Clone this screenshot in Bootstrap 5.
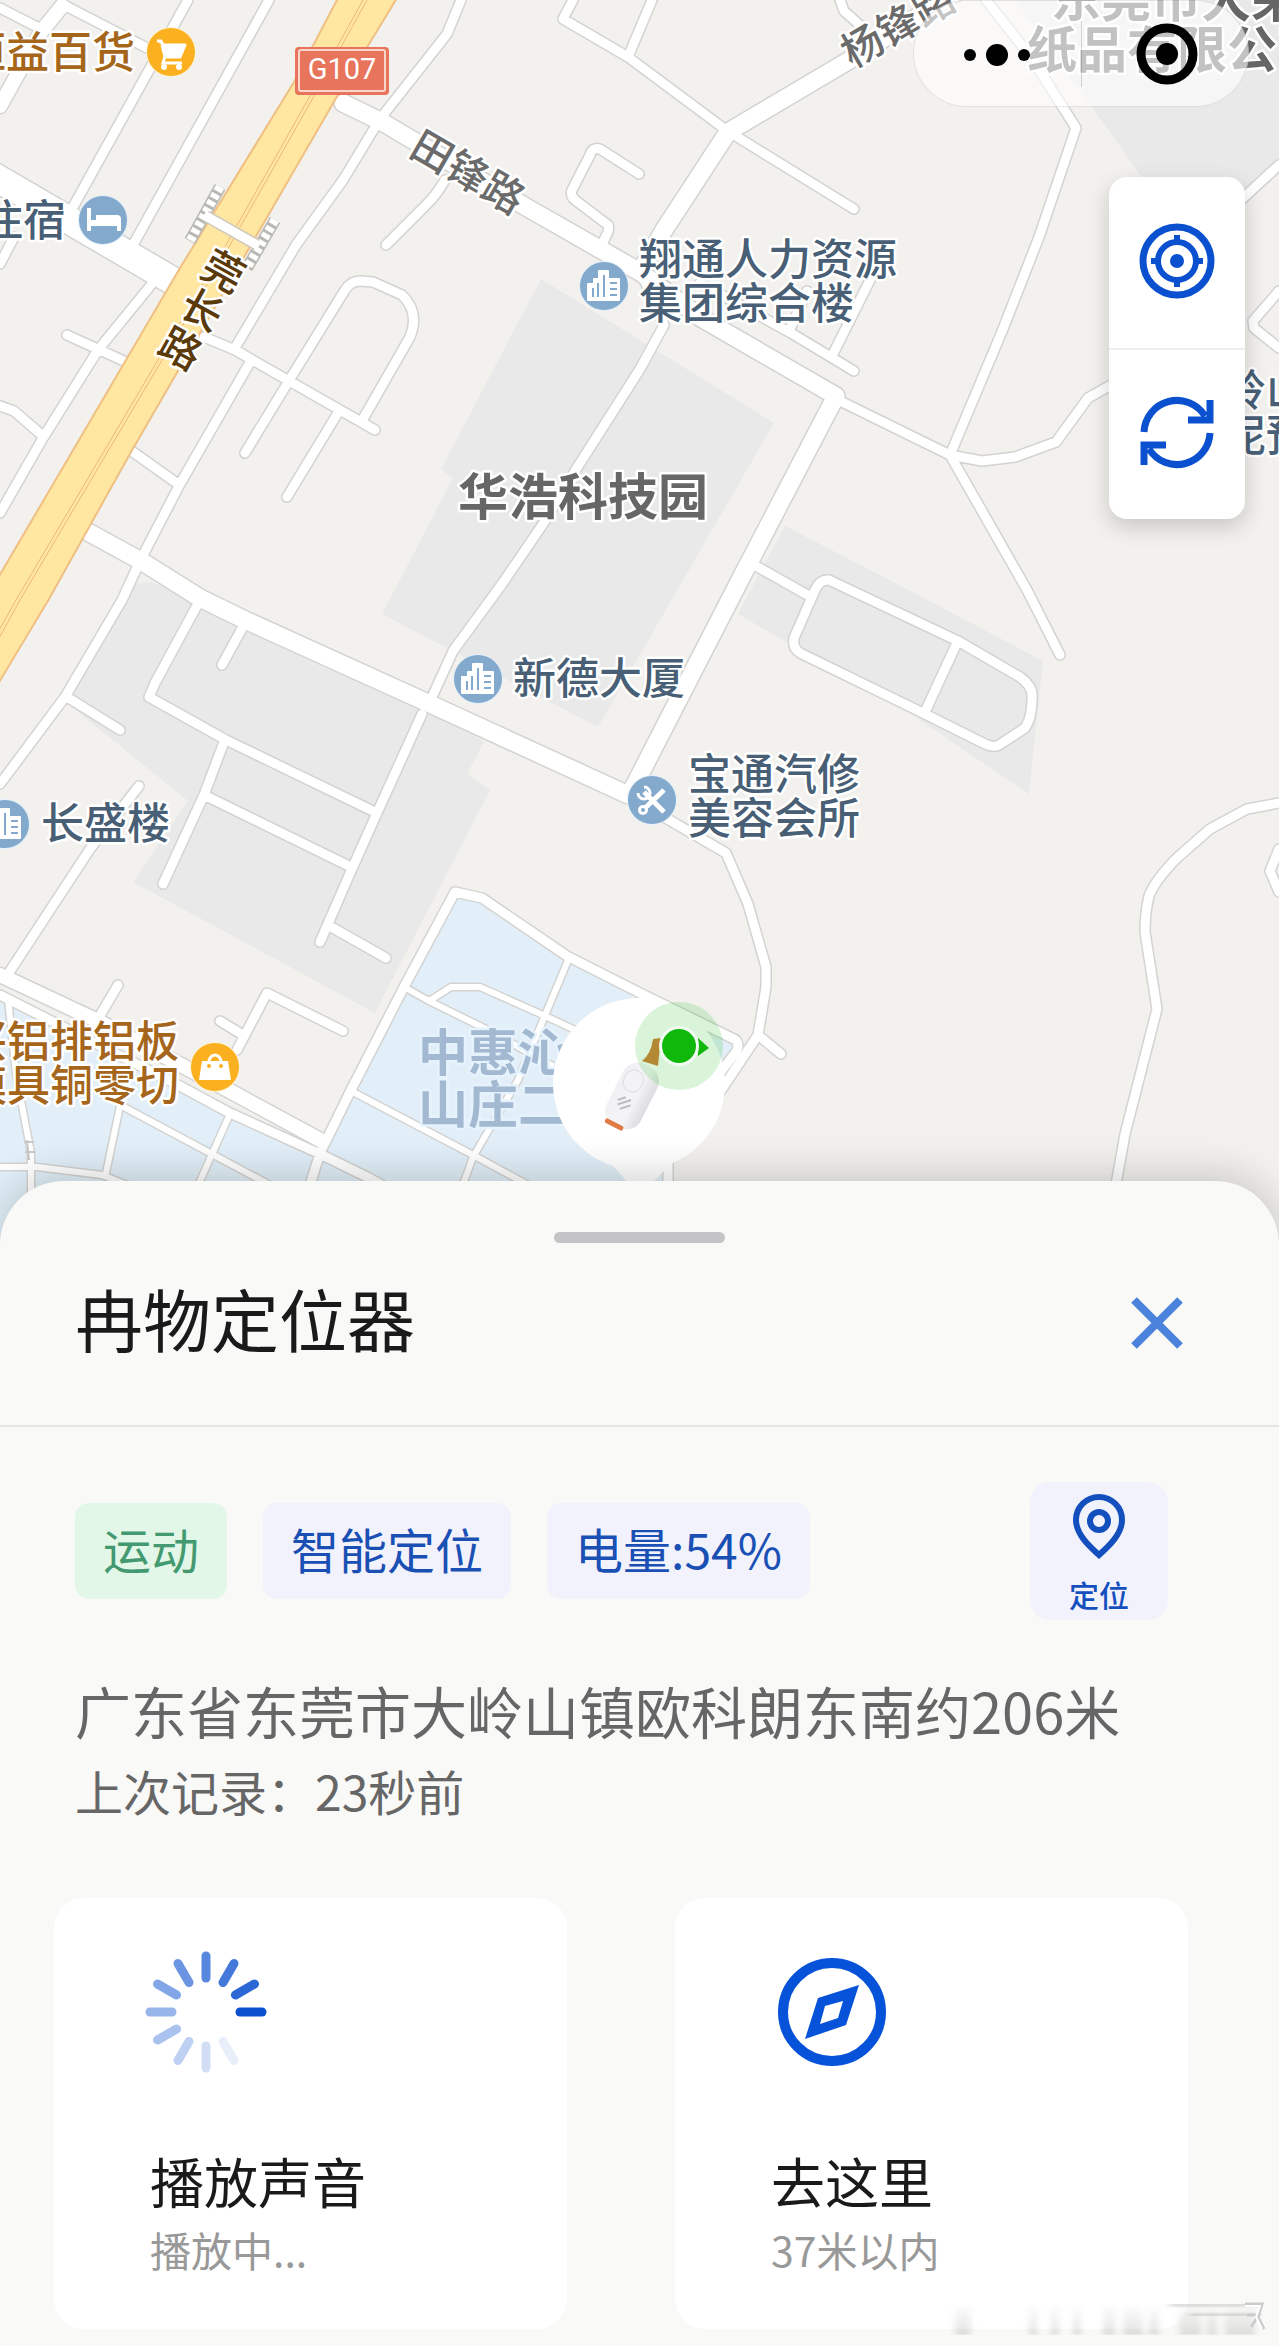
<!DOCTYPE html>
<html lang="zh-CN">
<head>
<meta charset="utf-8">
<meta name="viewport" content="width=device-width, initial-scale=1">
<title>冉物定位器</title>
<link rel="stylesheet" href="https://cdn.jsdelivr.net/npm/bootstrap@5.3.0/dist/css/bootstrap.min.css">
<style>
  body { background: #f9f9f7; color: #1a1a1a; font-family: "Noto Sans CJK SC", sans-serif; overflow-x: hidden; }
  button { font-family: inherit; }

  /* map */
  .map-canvas { background: #f2f1ed; }
  .map-canvas text { font-family: "Noto Sans CJK SC", sans-serif; paint-order: stroke; stroke: #fff; stroke-width: 5px; stroke-linejoin: round; }
  .zone { fill: #e9e9e9; }
  .estate { fill: #e2eff8; }
  .edge { stroke: #d3d3d2; fill: none; stroke-linejoin: round; stroke-linecap: round; }
  .lane { stroke: #fff; fill: none; stroke-linejoin: round; stroke-linecap: round; }
  .poi { font-size: 43px; font-weight: 500; fill: #485f76; }
  .poi.shop { fill: #a5661b; }
  .area-name { font-size: 50px; font-weight: 700; fill: #666; }
  .map-canvas .estate-name { font-size: 50px; font-weight: 700; fill: #a3b9d1; stroke: #e6f3fd; }
  .street { font-size: 41px; font-weight: 500; fill: #6b6b6b; text-anchor: middle; }
  .street.main { fill: #5a3a08; }
  .map-canvas .shield { font-family: Roboto, sans-serif; font-size: 29px; fill: #fff; stroke: none; text-anchor: middle; }

  /* controls floating over the map */
  .capsule { top: 0; right: 30px; width: 336px; height: 107px; border: 1px solid #00000018; border-radius: 54px; background: #ffffff99; }
  .capsule button, .map-tools button, .btn-x { background: none; border: 0; padding: 0; }
  .capsule .split { width: 1px; height: 66px; background: #00000026; }
  .map-tools { top: 177px; right: 34px; width: 136px; border-radius: 18px; background: #fff; box-shadow: 0 8px 22px #0000002e; }
  .map-tools button { height: 171px; padding-bottom: 4px; color: #0a50cf; }
  .map-tools button + button { border-top: 2px solid #ededed; }

  /* bottom sheet */
  .sheet { margin-top: -69px; padding-top: 51px; padding-bottom: 18px; background: #f9f9f7; border-radius: 64px 64px 0 0; box-shadow: 0 -6px 40px #0000002e; }
  .grip { width: 171px; height: 11px; border-radius: 6px; background: #c4c4c6; }
  .sheet-head { padding: 35px 92px 57px 75px; border-bottom: 2px solid #e6e6e5; }
  .sheet-title { padding-bottom: 10px; font-size: 68px; line-height: 80px; font-weight: 400; }
  .status { padding: 55px 111px 0 75px; }
  .tags { gap: 36px; }
  .chip { padding: 0 28px 6px; border-radius: 14px; font-size: 48px; line-height: 90px; background: #f2f2fd; color: #1a4fb4; }
  .chip.moving { background: #e2f7e7; color: #449a70; }
  .btn-locate { width: 138px; height: 138px; border: 0; border-radius: 20px; background: #f2f2fd; color: #1450bd; font-size: 30px; line-height: 36px; font-weight: 500; padding: 12px 0 8px; }
  .place { padding: 50px 75px 68px; color: #666; line-height: 80px; }
  .place .addr { font-size: 56px; }
  .place .seen { font-size: 48px; }
  .actions { gap: 108px; padding: 0 91px 0 54px; }
  .action { flex: 1 1 0; border: 0; border-radius: 30px; background: #fff; padding: 54px 40px 48px 96px; color: #1a1a1a; text-align: left; }
  .action .glyph { display: block; overflow: visible; margin-bottom: 73px; }
  .action .name { font-size: 54px; line-height: 72px; }
  .action .note { font-size: 41px; line-height: 64px; color: #999; }
  .smear { right: 10px; bottom: 12px; width: 330px; height: 34px; }
</style>
<script src="https://cdn.jsdelivr.net/npm/bootstrap@5.3.0/dist/js/bootstrap.bundle.min.js" defer></script>
</head>
<body>
<main class="position-relative">
  <section class="position-relative" aria-label="地图">
    <svg class="map-canvas d-block w-100" viewBox="0 0 1279 1250" role="img" aria-label="设备位置地图">
      <defs>
        <path id="r-small" d="M0 8 41 29M62 4 147 48M188 0 73 207M269 0 133 245M461 0 447 34 380 119 343 180 296 245 235 348M204 337 235 350 375 430M249 364 180 484 141 559 122 600 65 697 0 784M133 452 178 484M245 453 290 379 345 290Q351 281 360 281L373 282 402 295Q420 312 410 337L363 419M339 411 287 497M445 180Q436 196 424 207L386 245M151 285 98 350 43 438 0 513M67 335 126 362M0 406 14 411 43 436M14 237 0 264M573 0 563 19 628 57 726 130 854 209M652 0 628 57M639 174 600 149Q592 147 590 155L572 190Q570 196 575 200L608 225Q610 230 606 236L600 249M700 283 791 333 854 371M832 356 872 276M791 327 807 291M840 0 844 11 862 27M986 0 1031 57 1076 128 1039 237 1003 329 950 455M838 400 950 455 982 461 1015 457 1056 442 1088 398 1120 380M950 455 1027 590 1060 655M1279 165 1240 201M1279 291 1253 321 1254 328 1279 348M640 270 664 325 640 369 575 471 543 524 502 584 453 651 433 695M422 714 377 813 351 871 320 942M333 928 386 958M756 566 811 597M829 580 958 641 1020 677Q1034 687 1032 699 1032 718 1025 728L999 745Q994 748 985 744L925 714 800 653Q792 648 794 638L815 590Q820 579 829 580ZM956 645 925 712M664 817 726 853 748 904 766 967 766 987 758 1035 700 1122M758 1035 781 1054M1279 803 1247 809 1210 829 1178 857Q1155 880 1149 896 1145 912 1145 932L1157 1009 1125 1134 1115 1190M1279 849 1270 871 1279 892M200 600 155 683 149 697 226 740 377 813M245 623 222 665M67 697 120 730M224 742 204 795 163 884M204 795 351 867M139 786 90 849 10 971M118 985 98 1019M220 1021 243 1035M237 1050 267 993 343 1031M0 995 180 1086 228 1112 318 1153 367 1177 400 1195M310 1185 320 1153 351 1090 404 987 455 892 482 898 567 956 640 993 736 1040Q740 1046 736 1052L668 1140 668 1200M206 216 257 245"/>
        <path id="r-mid" d="M62 6 41 32 0 106M0 975 98 1021 228 1090 322 1141"/>
        <path id="r-wide" d="M343 103 382 122 526 207 640 272 701 318 836 396 740 580 632 790M88 532 141 561 200 598 245 620 428 703 624 793 652 804M960-10 848 61 728 132 664 230 640 272"/>
        <path id="r-lot" d="M404 987 429 1001 490 1031 560 1070M429 1001 451 987 480 987 543 1015 590 1037M569 958 518 1080 473 1157 461 1190M353 1092 473 1155 530 1186M122 1106 210 1153 270 1185M230 1114 196 1190M120 1106 106 1173M0 1167 37 1167 102 1175 140 1190M8 999 16 1074 31 1153 31 1240"/>
        <g id="ic-tower">
          <circle r="25" fill="#e4f0fa"/><circle r="24" fill="#83a9cc"/>
          <path d="M-16 14V-2h6v-5h5v-8h9v8h11v21z" fill="#fff" stroke="#fff" stroke-width="2" stroke-linejoin="round"/>
          <path d="M-11 11V2M-6 11V-3M0 11v-22M6 -3h7M6 3h7M6 9h7" stroke="#83a9cc" stroke-width="2"/>
        </g>
        <linearGradient id="body-shade" x1="0" x2="1"><stop offset="0" stop-color="#f1f1f4"/><stop offset=".6" stop-color="#f4f4f6"/><stop offset="1" stop-color="#dcdce1"/></linearGradient>
      </defs>

      <g class="zone">
        <path d="M541 279 774 423 598 727 382 614 453 478 441 469z"/>
        <path d="M1015 0H1279V165L1247 195 1155 195z"/>
        <path d="M785 526 901 586 1043 661 1029 794 905 710 738 614z"/>
        <path d="M135 584 151 582 245 620 428 703 484 742 467 774 490 790 375 1013 133 882 188 801 67 703z"/>
      </g>
      <path class="estate" d="M320 1153 404 987 455 892 482 898 567 956 738 1043 668 1140 660 1250H0V995z"/>

      <g class="edge"><use href="#r-lot" stroke-width="9"/><use href="#r-small" stroke-width="12"/><use href="#r-mid" stroke-width="17"/><use href="#r-wide" stroke-width="20"/><path d="M-10 174 180 285" stroke-width="30"/></g>
      <g class="lane"><use href="#r-lot" stroke-width="6"/><use href="#r-small" stroke-width="9"/><use href="#r-mid" stroke-width="14"/><use href="#r-wide" stroke-width="17"/><path d="M-10 174 180 285" stroke-width="27"/></g>
      <path d="M27 1140 29 1160M24 1142h10M25 1152h10" stroke="#c8c8c8" stroke-width="2" fill="none"/>

      <path d="M338-2 294 82 180 268-2 578V684L49 599 131 452 335 100 397-2z" fill="#ffe7a2" stroke="#efbf83" stroke-width="2"/>
      <path d="M367 0 314 96 230 245 20 600-2 640M363 0 310 96 226 245 16 600-2 632" fill="none" stroke="#eeb67b" stroke-width="1"/>
      <g fill="none">
        <path d="M220 187 190 241M275 220 247 268" stroke="#b9b9b3" stroke-width="12"/>
        <path d="M220 187 190 241M275 220 247 268" stroke="#fff" stroke-width="9" stroke-dasharray="5 3"/>
        <path d="M206 216 257 245" stroke="#cfcabb" stroke-width="12"/><path d="M204 215 259 246" stroke="#fff" stroke-width="9"/>
      </g>
      <rect x="295" y="47" width="94" height="48" rx="4" fill="#e8745c"/><rect x="299" y="50" width="86" height="41" rx="2" fill="none" stroke="#f9d5cc" stroke-width="2"/>
      <text class="shield" x="342" y="79">G107</text>

      <text class="poi shop" x="135" y="68" text-anchor="end">恒益百货</text>
      <text class="poi" x="66" y="236" text-anchor="end">住宿</text>
      <text class="poi" x="639" y="275">翔通人力资源<tspan x="639" y="319">集团综合楼</tspan></text>
      <text class="poi" x="513" y="694">新德大厦</text>
      <text class="poi" x="688" y="790">宝通汽修<tspan x="688" y="834">美容会所</tspan></text>
      <text class="poi" x="41" y="839">长盛楼</text>
      <text class="poi shop" x="179" y="1057" text-anchor="end">兴铝排铝板<tspan x="179" y="1101">模具铜零切</tspan></text>
      <text class="poi" x="1223" y="406">岭山<tspan x="1223" y="451">泥预</tspan></text>
      <text class="area-name" x="458" y="515">华浩科技园</text>
      <text class="area-name" x="1051" y="17">东莞市大荣<tspan x="1027" y="68">纸品有限公司</tspan></text>
      <text class="estate-name" x="418" y="1071">中惠沁<tspan x="418" y="1123">山庄二</tspan></text>
      <text class="street" transform="translate(468 172) rotate(30)" y="15">田锋路</text>
      <text class="street" transform="translate(898 25) rotate(-30)" y="15">杨锋路</text>
      <g transform="translate(202 310) rotate(29)"><text class="street main"><tspan x="0" y="-29">莞</tspan><tspan x="0" y="15">长</tspan><tspan x="0" y="59">路</tspan></text></g>

      <g transform="translate(171 52)"><circle r="25" fill="#fff3d6"/><circle r="24" fill="#fbb01f"/><path d="M-14-11h4l2 4H14L9 5H-6L-9-7" fill="#fff" stroke="#fff" stroke-width="3" stroke-linejoin="round"/><path d="M-6 4-8 11H11" fill="none" stroke="#fff" stroke-width="3"/><circle cx="-7" cy="15" r="3" fill="#fff"/><circle cx="8" cy="15" r="3" fill="#fff"/></g>
      <g transform="translate(103 220)"><circle r="25" fill="#e4f0fa"/><circle r="24" fill="#83a9cc"/><path d="M-16-12h4V0H18V11h-4V6h-26v5h-4z" fill="#fff"/><path d="M-7-5H14Q18-5 18-1V2H-7z" fill="#fff"/></g>
      <use href="#ic-tower" x="604" y="286"/><use href="#ic-tower" x="478" y="679"/><use href="#ic-tower" x="5" y="824"/>
      <g transform="translate(652 800)"><circle r="25" fill="#e4f0fa"/><circle r="24" fill="#83a9cc"/><path d="M-8-8 12 12" stroke="#fff" stroke-width="5"/><path d="M12-10-9 10" stroke="#fff" stroke-width="5"/><path d="M-8-13a6 6 0 1 1-6 6" fill="none" stroke="#fff" stroke-width="3"/><circle cx="-9" cy="10" r="5" fill="#fff"/><circle cx="-9" cy="10" r="2" fill="#83a9cc"/></g>
      <g transform="translate(215 1067)"><circle r="25" fill="#fff3d6"/><circle r="24" fill="#fbb01f"/><path d="M-13-6H13L16 13H-16z" fill="#fff"/><path d="M-6-5a6 7 0 0 1 12 0" fill="none" stroke="#fff" stroke-width="3"/><circle cx="-6" cy="-1" r="2" fill="#fbb01f"/><circle cx="6" cy="-1" r="2" fill="#fbb01f"/></g>

      <g>
        <path d="M606 1158 640 1196 676 1158z" fill="#fff"/><circle cx="639" cy="1084" r="86" fill="#fff"/>
        <path d="M653 1039 661 1038 659 1056 658 1066 642 1061Q651 1054 653 1039z" fill="#d2803c"/>
        <g transform="translate(632 1096) rotate(27)">
          <rect x="-19" y="-34" width="38" height="68" rx="16" fill="url(#body-shade)"/>
          <rect x="-15" y="-25" width="19" height="22" rx="9" fill="#f3f3f7" stroke="#dcdce4"/>
          <path d="M-11 10-5 4M-9 14 1 4M-5 17 3 9" stroke="#b9b9c0" stroke-width="2"/>
          <rect x="-13" y="31" width="20" height="5" rx="2" fill="#e07a44"/>
        </g>
        <circle cx="679" cy="1046" r="44" fill="#18bb18" fill-opacity=".16"/>
        <path d="M698 1038 709 1048 698 1056z" fill="#11b80c"/>
        <circle cx="679" cy="1046" r="20" fill="#f2fbf1"/><circle cx="679" cy="1046" r="17" fill="#11b80c"/>
      </g>
    </svg>

    <div class="capsule position-absolute d-flex align-items-center">
      <button type="button" class="w-50 h-100" aria-label="更多"><svg width="66" height="24" viewBox="0 0 66 24"><circle cx="6" cy="12" r="6"/><circle cx="33" cy="12" r="11"/><circle cx="60" cy="12" r="6"/></svg></button>
      <span class="split"></span>
      <button type="button" class="w-50 h-100 ps-1" aria-label="关闭小程序"><svg width="62" height="62" viewBox="0 0 62 62"><circle cx="31" cy="31" r="26" fill="none" stroke="#000" stroke-width="9"/><circle cx="31" cy="31" r="11"/></svg></button>
    </div>

    <div class="map-tools position-absolute d-flex flex-column">
      <button type="button" aria-label="定位到中心"><svg width="76" height="76" viewBox="0 0 76 76" fill="none" stroke="currentColor"><circle cx="38" cy="38" r="34" stroke-width="7"/><circle cx="38" cy="38" r="19" stroke-width="6"/><circle cx="38" cy="38" r="7" fill="currentColor" stroke="none"/><path d="M38 12v9M38 55v9M12 38h9M55 38h9" stroke-width="6"/></svg></button>
      <button type="button" aria-label="刷新"><svg width="76" height="76" viewBox="0 0 76 76" fill="none" stroke="currentColor" stroke-width="7"><path d="M5 37A33 33 0 0 1 66 21M71 38A33 33 0 0 1 10 54M71 5V25H49M5 70V50H27"/></svg></button>
    </div>
  </section>

  <section class="sheet position-relative">
    <div class="grip mx-auto"></div>
    <header class="sheet-head d-flex justify-content-between align-items-center">
      <h1 class="sheet-title mb-0">冉物定位器</h1>
      <button type="button" class="btn-x d-flex" aria-label="关闭"><svg width="61" height="52" viewBox="0 0 61 52"><path d="M8 3 54 49M54 3 8 49" stroke="#4a82dc" stroke-width="8"/></svg></button>
    </header>

    <div class="status d-flex justify-content-between align-items-center">
      <div class="tags d-flex">
        <span class="chip moving">运动</span>
        <span class="chip">智能定位</span>
        <span class="chip">电量:54%</span>
      </div>
      <button type="button" class="btn-locate d-flex flex-column align-items-center justify-content-between">
        <svg width="52" height="65" viewBox="0 0 52 65" fill="none" stroke="currentColor" stroke-width="6"><path d="M26 61C16 52 3 40 3 26a23 23 0 0 1 46 0C49 40 36 52 26 61z"/><circle cx="26" cy="27" r="9"/></svg>
        <span>定位</span>
      </button>
    </div>

    <div class="place">
      <p class="addr m-0">广东省东莞市大岭山镇欧科朗东南约206米</p>
      <p class="seen m-0">上次记录：23秒前</p>
    </div>

    <div class="actions d-flex">
      <button type="button" class="action">
        <svg class="glyph" width="120" height="120" viewBox="4 0 120 120" stroke="#0a50cf" stroke-width="9" stroke-linecap="round">
          <path d="M94 60h22"/>
          <path d="M94 60h22" transform="rotate(-30 60 60)" opacity=".86"/>
          <path d="M94 60h22" transform="rotate(-60 60 60)" opacity=".76"/>
          <path d="M94 60h22" transform="rotate(-90 60 60)" opacity=".68"/>
          <path d="M94 60h22" transform="rotate(-120 60 60)" opacity=".6"/>
          <path d="M94 60h22" transform="rotate(-150 60 60)" opacity=".5"/>
          <path d="M94 60h22" transform="rotate(180 60 60)" opacity=".42"/>
          <path d="M94 60h22" transform="rotate(150 60 60)" opacity=".34"/>
          <path d="M94 60h22" transform="rotate(120 60 60)" opacity=".26"/>
          <path d="M94 60h22" transform="rotate(90 60 60)" opacity=".18"/>
          <path d="M94 60h22" transform="rotate(60 60 60)" opacity=".09"/>
        </svg>
        <span class="name d-block">播放声音</span>
        <span class="note d-block">播放中...</span>
      </button>
      <button type="button" class="action">
        <svg class="glyph" width="120" height="120" viewBox="0 0 120 120"><circle cx="61" cy="60" r="49" fill="none" stroke="#0652d9" stroke-width="10"/><path fill="#0652d9" fill-rule="evenodd" d="M88 33 75 73 34 87 47 46zM72 49 54 54 49 72 67 66z"/></svg>
        <span class="name d-block">去这里</span>
        <span class="note d-block">37米以内</span>
      </button>
    </div>
    <svg class="smear position-absolute" viewBox="0 0 330 34" aria-hidden="true">
      <defs>
        <linearGradient id="fade" x2="0" y2="1"><stop offset="0" stop-color="#999" stop-opacity="0"/><stop offset="1" stop-color="#888" stop-opacity=".25"/></linearGradient>
        <filter id="soft"><feGaussianBlur stdDeviation="3 1"/></filter>
      </defs>
      <g fill="url(#fade)" filter="url(#soft)"><path d="M16 2h16v32H16zM90 4h8v30h-8zM112 4h8v30h-8zM134 4h8v30h-8zM164 4h12v30h-12zM184 4h20v30h-20zM210 4h10v30h-10zM240 4h22v30h-22zM268 4h10v30h-10zM286 4h30v30h-30z"/></g>
      <g fill="none" stroke="#bbb" opacity=".6" filter="url(#soft)"><path d="M230 4H320M250 14H318" stroke-width="3"/></g>
      <path d="M306 3h17l-4 13 6 12M308 14h12l-8 12" fill="none" stroke="#ccc" stroke-width="3"/><path d="M306 5h15l-4 11 6 12" fill="none" stroke="#fff" stroke-width="2"/>
    </svg>
  </section>
</main>
</body>
</html>
